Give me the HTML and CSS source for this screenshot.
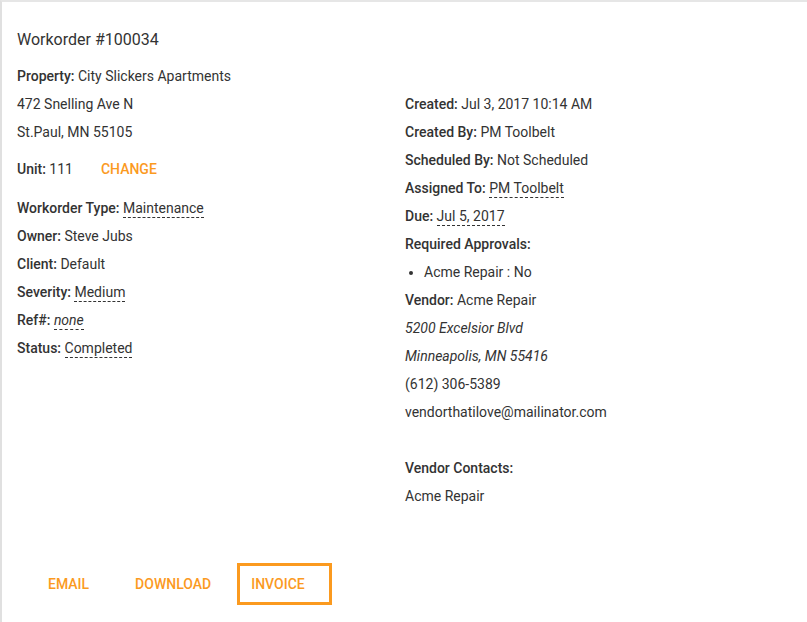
FILE: index.html
```html
<!DOCTYPE html>
<html>
<head>
<meta charset="utf-8">
<link rel="stylesheet" href="styles.css">
</head>
<body>
<div class="card">
  <div class="title">Workorder #100034</div>
  <div class="cols">
    <div class="col">
      <div class="row"><span class="lbl">Property:</span> City Slickers Apartments</div>
      <div class="row">472 Snelling Ave N</div>
      <div class="row">St.Paul, MN 55105</div>
      <div class="row unit"><span><span class="lbl">Unit:</span> 111</span><button class="btn change">CHANGE</button></div>
      <div class="row"><span class="lbl">Workorder Type:</span> <span class="dash">Maintenance</span></div>
      <div class="row"><span class="lbl">Owner:</span> Steve Jubs</div>
      <div class="row"><span class="lbl">Client:</span> Default</div>
      <div class="row"><span class="lbl">Severity:</span> <span class="dash">Medium</span></div>
      <div class="row"><span class="lbl">Ref#:</span> <span class="dash"><em>none</em></span></div>
      <div class="row"><span class="lbl">Status:</span> <span class="dash">Completed</span></div>
    </div>
    <div class="col right">
      <div class="row"><span class="lbl">Created:</span> Jul 3, 2017 10:14 AM</div>
      <div class="row"><span class="lbl">Created By:</span> PM Toolbelt</div>
      <div class="row"><span class="lbl">Scheduled By:</span> Not Scheduled</div>
      <div class="row"><span class="lbl">Assigned To:</span> <span class="dash">PM Toolbelt</span></div>
      <div class="row"><span class="lbl">Due:</span> <span class="dash">Jul 5, 2017</span></div>
      <div class="row"><span class="lbl">Required Approvals:</span></div>
      <ul class="list"><li class="row">Acme Repair : No</li></ul>
      <div class="row"><span class="lbl">Vendor:</span> Acme Repair</div>
      <div class="row"><em>5200 Excelsior Blvd</em></div>
      <div class="row"><em>Minneapolis, MN 55416</em></div>
      <div class="row">(612) 306-5389</div>
      <div class="row">vendorthatilove@mailinator.com</div>
      <div class="row"></div>
      <div class="row"><span class="lbl">Vendor Contacts:</span></div>
      <div class="row">Acme Repair</div>
    </div>
  </div>
  <div class="actions">
    <button class="btn email">EMAIL</button>
    <button class="btn download">DOWNLOAD</button>
    <button class="btn invoice">INVOICE</button>
  </div>
</div>
</body>
</html>
```
FILE: styles.css
```css
html, body {
  margin: 0;
  padding: 0;
  background: #fff;
}
body {
  font-family: Roboto, "Liberation Sans", sans-serif;
  color: #333;
  font-size: 14px;
}
.card {
  border-top: 2px solid #e6e6e6;
  border-left: 2px solid #e0e0e0;
  min-height: 640px;
  padding: 0 0 0 15px;
  box-sizing: border-box;
}
.title {
  font-size: 16px;
  line-height: 28px;
  padding-top: 24px;
  margin-bottom: 8px;
}
.cols {
  display: grid;
  grid-template-columns: 388px 1fr;
}
.right {
  padding-top: 28px;
}
.row {
  line-height: 28px;
  height: 28px;
  white-space: nowrap;
}
.lbl {
  font-weight: 500;
}
.dash {
  border-bottom: 1px dashed #333;
  padding-bottom: 1px;
}
em {
  font-style: italic;
}
.unit {
  height: 36px;
  line-height: 36px;
  margin: 5px 0 7px;
  display: flex;
  align-items: center;
}
.btn {
  font-family: Roboto, "Liberation Sans", sans-serif;
  font-size: 14px;
  font-weight: 500;
  color: #fb9a1f;
  background: none;
  border: 0;
  height: 36px;
  line-height: 36px;
  padding: 0 14px;
  cursor: pointer;
}
.change {
  margin-left: 14px;
}
.list {
  margin: 0;
  padding-left: 19px;
}
.actions {
  display: flex;
  align-items: center;
  margin-top: 53px;
  padding-left: 17px;
}
.download {
  margin-left: 18px;
}
.invoice {
  box-sizing: border-box;
  margin-left: 12px;
  width: 95px;
  height: 42px;
  text-align: left;
  border: 3px solid #fb9a1f;
  padding: 0 11px;
  line-height: 36px;
}
```
